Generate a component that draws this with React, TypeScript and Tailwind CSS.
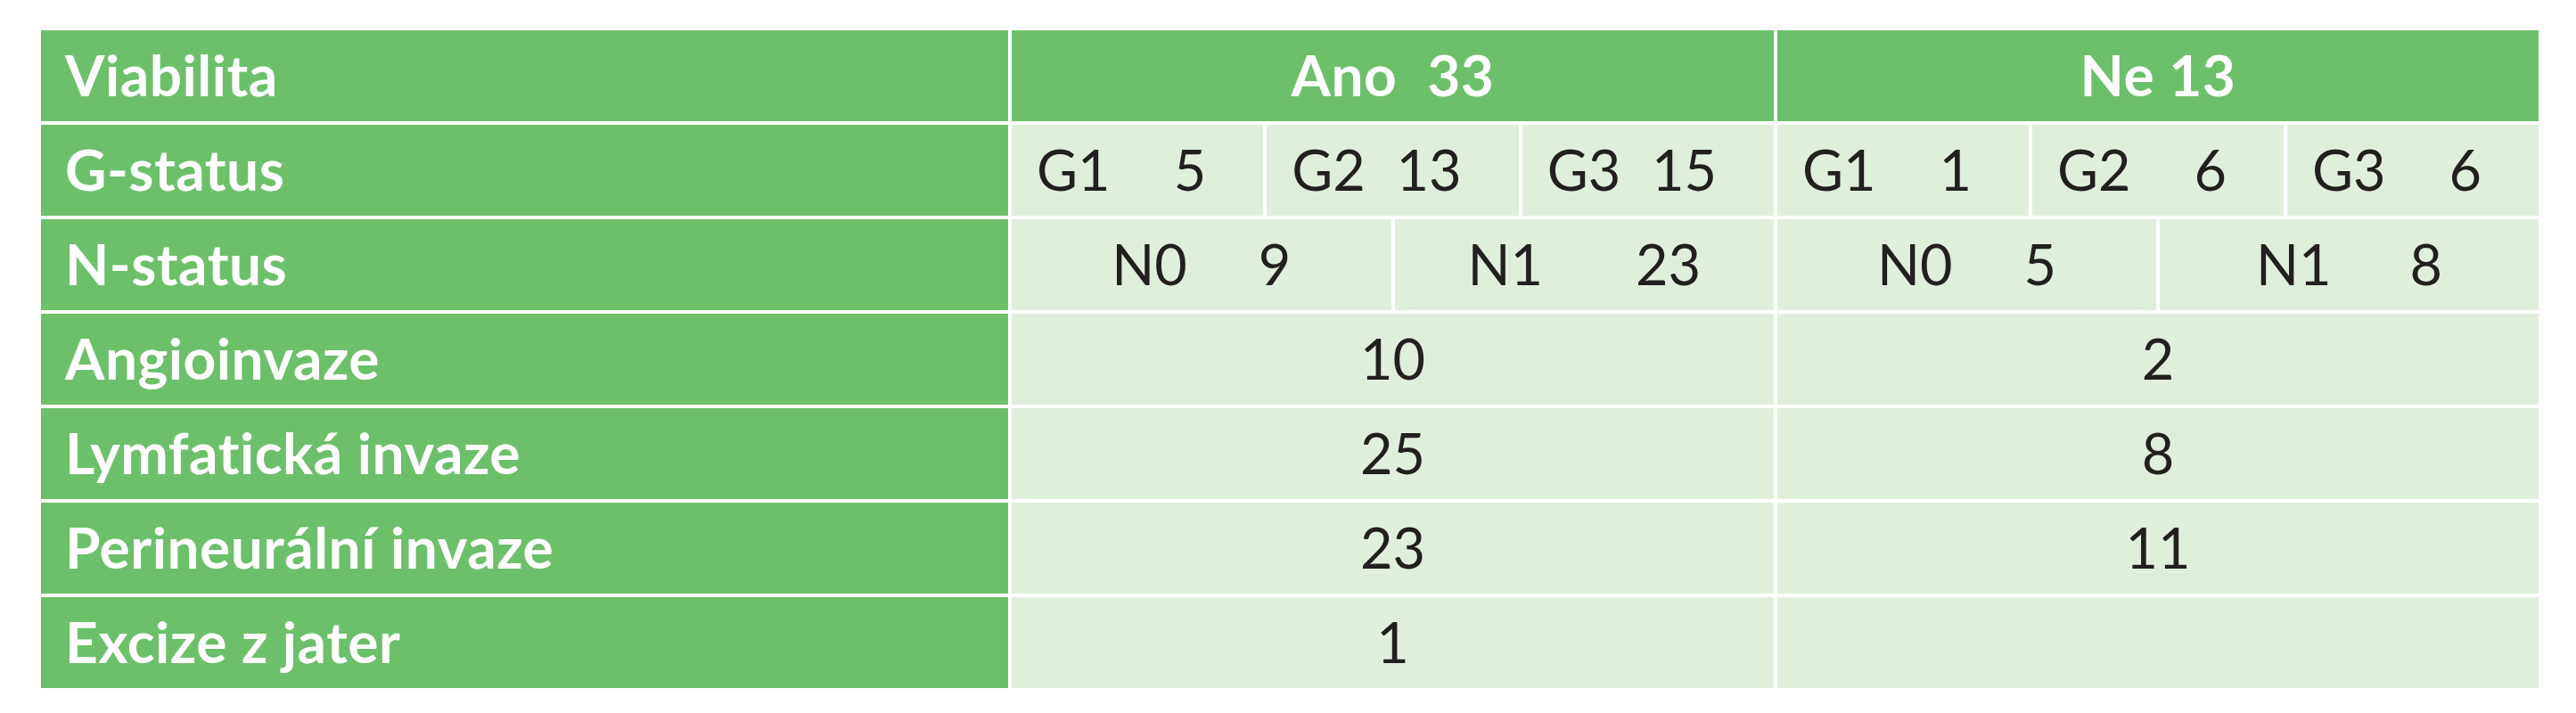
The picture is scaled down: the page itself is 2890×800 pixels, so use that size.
import React from "react";

// Viabilita table: label column + "Ano" / "Ne" groups
type GCell = { g: string; n: number };
type NCell = { label: string; n: number; gap: string };

const gAno: GCell[] = [
  { g: "G1", n: 5 },
  { g: "G2", n: 13 },
  { g: "G3", n: 15 },
];
const gNe: GCell[] = [
  { g: "G1", n: 1 },
  { g: "G2", n: 6 },
  { g: "G3", n: 6 },
];

const nAno: NCell[] = [
  { label: "N0", n: 9, gap: "gap-[80px]" },
  { label: "N1", n: 23, gap: "gap-[104px]" },
];
const nNe: NCell[] = [
  { label: "N0", n: 5, gap: "gap-[80px]" },
  { label: "N1", n: 8, gap: "gap-[88px]" },
];

const simpleRows: { label: string; ano: string; ne: string }[] = [
  { label: "Angioinvaze", ano: "10", ne: "2" },
  { label: "Lymfatická invaze", ano: "25", ne: "8" },
  { label: "Perineurální invaze", ano: "23", ne: "11" },
  { label: "Excize z jater", ano: "1", ne: "" },
];

const RowLabel = ({ children }: { children: React.ReactNode }) => (
  <div className="flex items-center bg-[#6cc06a] pl-[27px] pb-[3px] text-[64px] font-bold tracking-[0.5px] text-white">
    {children}
  </div>
);

const Light = ({ className = "", children }: { className?: string; children?: React.ReactNode }) => (
  <div className={`flex items-center bg-[#e0efdc] pb-[3px] text-[#231f20] ${className}`}>{children}</div>
);

export default function App() {
  return (
    <div className="min-h-screen bg-white pt-[34px] pl-[46px] font-['Lato','Liberation_Sans',sans-serif]">
      <div className="grid w-[2802px] grid-cols-[1085px_855px_854px] auto-rows-[102px] gap-[4px] text-[63px] leading-none">
        {/* header */}
        <RowLabel>Viabilita</RowLabel>
        <div className="flex items-center justify-center bg-[#6cc06a] pb-[3px] text-[64px] font-bold tracking-[0.5px] text-white">
          <span>Ano</span>
          <span className="ml-[34px]">33</span>
        </div>
        <div className="flex items-center justify-center bg-[#6cc06a] pb-[3px] text-[64px] font-bold tracking-[0.5px] text-white">
          Ne 13
        </div>

        {/* G-status */}
        <RowLabel>G-status</RowLabel>
        {[gAno, gNe].map((group, gi) => (
          <div key={gi} className="grid grid-cols-3 gap-[4px]">
            {group.map((c) => (
              <Light key={c.g} className="pl-[28px] pr-[64px]">
                <span>{c.g}</span>
                <span className="ml-auto">{c.n}</span>
              </Light>
            ))}
          </div>
        ))}

        {/* N-status */}
        <RowLabel>N-status</RowLabel>
        {[nAno, nNe].map((group, gi) => (
          <div key={gi} className="grid grid-cols-2 gap-[4px]">
            {group.map((c) => (
              <Light key={c.label} className={`justify-center ${c.gap}`}>
                <span>{c.label}</span>
                <span>{c.n}</span>
              </Light>
            ))}
          </div>
        ))}

        {simpleRows.map((r) => (
          <React.Fragment key={r.label}>
            <RowLabel>{r.label}</RowLabel>
            <Light className="justify-center">{r.ano}</Light>
            <Light className="justify-center">{r.ne}</Light>
          </React.Fragment>
        ))}
      </div>
    </div>
  );
}
